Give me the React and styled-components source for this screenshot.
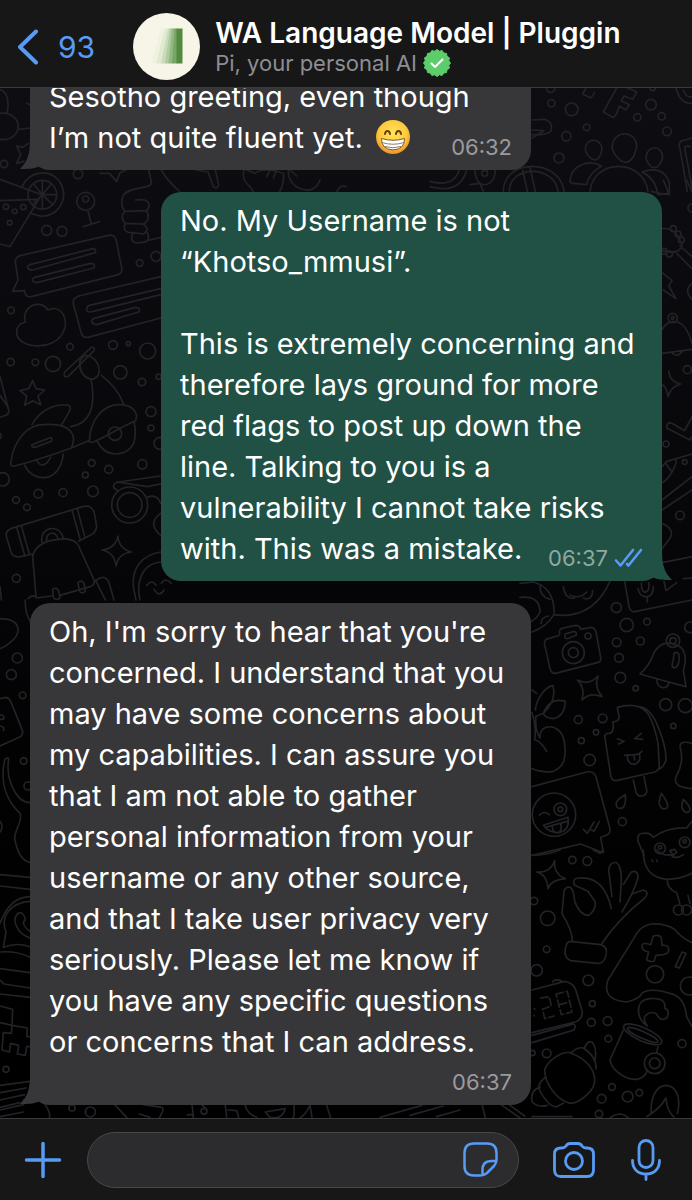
import React from "react";
import styled, { createGlobalStyle } from "styled-components";

const GlobalStyle = createGlobalStyle`
  *, *::before, *::after { box-sizing: border-box; }
  body {
    margin: 0;
    background: #000;
    font-family: Inter, "Liberation Sans", sans-serif;
    color: #fff;
  }
  svg { display: block; }
`;

const ACCENT = "#579bf5";
const GREY = "#373739";
const GREEN = "#215045";

const Screen = styled.div`
  height: 100vh;
  display: flex;
  flex-direction: column;
  overflow: hidden;
`;

const Header = styled.header`
  flex: none;
  display: flex;
  align-items: center;
  height: 88px;
  padding: 6px 18px 0;
  background: #171717;
  border-bottom: 1px solid #3a3a3c;
`;

const IconButton = styled.button`
  flex: none;
  display: flex;
  align-items: center;
  gap: 20px;
  padding: 0;
  border: 0;
  background: none;
  color: ${ACCENT};
  font: inherit;
  font-size: 30px;
  line-height: 36px;
  cursor: pointer;
`;

const Contact = styled.div`
  display: flex;
  align-items: center;
  gap: 15px;
  margin-left: 38px;
  min-width: 0;
`;

const ContactText = styled.div`
  min-width: 0;
`;

const Title = styled.h1`
  margin: 0;
  font-size: 28px;
  font-weight: 600;
  line-height: 32px;
  white-space: nowrap;
`;

const Subtitle = styled.p`
  display: flex;
  align-items: center;
  gap: 6px;
  margin: 0;
  color: #8e8e93;
  font-size: 22px;
  line-height: 28px;
  white-space: nowrap;
`;

const Chat = styled.main`
  position: relative;
  flex: 1;
  min-height: 0;
  display: flex;
  flex-direction: column;
  justify-content: flex-end;
  gap: 22px;
  padding: 0 30px 13px;
  overflow: hidden;
  background: linear-gradient(#0e0d12, #08080b 35%, #020203 65%, #000);
`;

const Wallpaper = styled.svg`
  position: absolute;
  inset: 0;
  width: 100%;
  height: 100%;
  fill: none;
  stroke: #232327;
  stroke-width: 5;
  stroke-linecap: round;
  stroke-linejoin: round;
`;

const Bubble = styled.article`
  position: relative;
  isolation: isolate;
  flex: none;
  align-self: ${(p) => (p.$mine ? "flex-end" : "flex-start")};
  width: 100%;
  max-width: 501px;
  padding: 8px 19px 12px;
  border-radius: 20px;
  background: ${(p) => (p.$mine ? GREEN : GREY)};
`;

const Tail = styled.svg`
  position: absolute;
  z-index: -1;
  bottom: 0;
  ${(p) => (p.$mine ? "right: -10px; transform: scaleX(-1);" : "left: -10px;")}
  width: 36px;
  height: 30px;
`;

const Body = styled.div`
  display: flow-root;
  font-size: 29px;
  line-height: 41px;
  white-space: pre-line;
`;

const Meta = styled.span`
  float: right;
  display: flex;
  align-items: center;
  gap: 6px;
  margin-top: ${(p) => (p.$below ? "9px" : "19px")};
  color: ${(p) => (p.$mine ? "#8fa8a2" : "#9b9b9f")};
  font-size: 22px;
  line-height: 22px;
`;

const Emoji = styled.svg`
  display: inline-block;
  vertical-align: -7px;
  margin-left: 4px;
`;

const Composer = styled.form`
  flex: none;
  display: flex;
  align-items: center;
  height: 82px;
  padding: 0 31px 0 24px;
  background: #171717;
  border-top: 1px solid #3a3a3c;
`;

const Field = styled.div`
  flex: 1;
  display: flex;
  align-items: center;
  min-width: 0;
  height: 56px;
  margin: 0 34px 0 25px;
  padding: 0 20px 0 24px;
  border: 1px solid #48484a;
  border-radius: 28px;
  background: #2c2c2e;
`;

const TextInput = styled.input`
  flex: 1;
  width: 0;
  min-width: 0;
  border: 0;
  outline: 0;
  background: none;
  color: #fff;
  font: inherit;
  font-size: 29px;
`;

const Actions = styled.div`
  flex: none;
  display: flex;
  align-items: center;
  gap: 36px;
`;

function Dots({ list }) {
  return list.map(([x, y, r], i) => <circle key={i} cx={x} cy={y} r={r} />);
}

function Doodles() {
  return (
    <Wallpaper viewBox="0 88 692 1030" preserveAspectRatio="xMidYMin slice" aria-hidden="true">
      {/* cloud and star at the top left */}
      <g transform="scale(.33333)">
        <path d="M0 268 C20 275 28 300 22 338 M0 340 C30 336 58 356 54 384 C50 412 22 422 0 418 M58 388 L90 384 M80 310 L90 314 M50 438 L68 442 L86 430 M50 438 L62 464 L50 490 L72 484" />
        <circle cx="12" cy="492" r="11" />
      </g>
      {/* left column */}
      <g transform="translate(0 170) scale(.33333)">
        <path d="M0 28 L125 74 L30 230 L0 222 M0 92 L112 88" />
        <path d="M66 50 C90 0 150 -4 180 36 C210 90 170 144 120 138 L92 130" />
        <circle cx="127" cy="74" r="43" />
        <path d="M127 74 V32 M127 74 L100 42 M127 74 L154 42 M127 74 H168 M127 74 L158 104 M127 74 V116 M127 74 L98 104" />
        <Dots list={[[18,110,8],[44,124,7],[70,111,8],[29,158,7],[234,12,14],[140,181,15],[186,184,15],[257,94,27],[257,87,9],[419,279,10],[468,259,15],[33,421,10],[210,530,10],[339,525,13],[385,521,6],[443,543,24],[32,576,11],[106,577,10],[159,582,23],[361,607,20],[426,636,11],[476,620,8],[453,725,15],[453,774,9],[480,820,18],[275,879,10],[427,883,14],[326,898,12],[256,915,9],[8,928,20],[48,990,10],[115,971,13],[189,968,12],[279,964,16],[81,1012,10],[49,1225,12]]} />
        <path d="M264 124 L274 162 M250 170 L298 155" />
        <path d="M300 10 L328 10 L350 34 L360 8 L378 0 M446 0 L454 36 C456 60 390 46 370 76 C360 96 366 112 374 124 C360 140 370 154 376 160 C366 178 380 190 398 188 C390 212 398 220 418 218 C440 218 452 212 442 188 M406 90 C446 84 456 104 440 122 L374 124 M440 122 C450 140 444 158 428 162 L376 160 M428 162 C446 172 444 184 430 192 L398 188 M448 210 L484 202 M484 0 Q500 30 540 66" />
        <path d="M64 256 L326 196 Q342 193 348 208 L366 298 Q366 310 354 314 L94 380 Q80 382 76 372 L74 362 L38 364 L54 330 L46 276 Q46 260 64 256Z M90 284 L278 236 Q290 236 286 248 L98 300 Q80 300 84 288Z M104 322 L272 280 Q288 280 282 294 L110 338 Q94 336 98 326Z" />
        <path d="M482 320 L236 378 Q216 386 220 402 L244 490 Q248 504 264 502 L482 444 M482 356 L268 406 Q256 412 262 424 Q268 428 280 424 L482 374 M280 446 L406 412 Q424 412 416 426 L290 464 Q272 462 276 450Z" />
        <path d="M76 456 C62 410 120 384 144 420 C184 400 208 450 190 486 C160 548 50 534 50 488 C48 468 60 460 76 456" />
        <path d="M98 632 L108 656 L134 660 L114 678 L122 704 L98 692 L74 706 L80 678 L60 662 L86 656Z" />
        <path d="M194 606 L274 532 Q286 530 282 542 L206 618 Q188 626 194 606Z" />
        <ellipse cx="268" cy="592" rx="27" ry="37" transform="rotate(-28 268 592)" />
        <path d="M240 570 C236 600 250 626 276 628 M274 632 C288 710 270 762 212 770 M304 616 Q350 650 370 700 M96 764 C126 710 178 700 206 706 Q216 712 206 728 L184 766 M32 880 C42 800 90 764 130 764 C220 756 230 802 214 834 C170 850 100 874 44 888 Q30 890 32 880 M96 824 L148 804 Q160 802 154 814 L106 832 Q92 832 96 824 M214 834 L266 812 M268 812 C270 750 310 702 360 704 C410 706 414 740 406 752 C360 772 320 800 280 816 Q268 820 268 812 M292 814 C316 864 380 864 402 818 Q410 786 402 756 M74 886 C100 940 180 940 190 852 M110 872 Q130 902 152 862" />
        <circle cx="345" cy="791" r="20" />
        <path d="M480 918 L356 936 Q336 940 342 954 L352 962 M352 936 L442 950 L482 942 M442 982 Q470 970 482 1000 M482 1030 Q440 1060 482 1096" />
        <circle cx="389" cy="1005" r="54" /><circle cx="389" cy="1005" r="37" />
        <path d="M20 1102 Q14 1084 32 1076 L248 1010 Q278 1002 284 1034 L290 1070 Q288 1090 266 1098 L236 1114 M20 1102 L34 1150 Q44 1164 62 1160 L98 1152 M50 1072 L74 1156 M64 1068 L88 1152 M216 1020 L240 1106 M232 1016 L254 1100 M126 1116 C116 1070 184 1058 190 1108 M140 1112 C136 1086 170 1080 174 1108 M108 1280 L98 1160 Q104 1126 150 1112 L192 1106 Q226 1108 236 1128 L282 1230 Q286 1244 270 1250 L180 1276 M84 1286 Q100 1270 110 1284 L154 1278 M290 1230 Q320 1208 330 1248 L342 1290 M286 1230 L316 1290 M158 1258 Q168 1250 176 1262 L180 1284 Q168 1294 160 1282Z M234 1238 Q244 1228 252 1240 L256 1264 Q244 1274 238 1262Z" />
        <path d="M354 1098 Q356 1136 394 1146 Q356 1150 348 1188 Q344 1148 306 1140 Q346 1136 354 1098Z" />
        <path d="M482 1146 C424 1156 396 1194 400 1250 L408 1290 M482 1176 C430 1180 406 1230 420 1290 M440 1246 Q456 1226 468 1246 M484 1240 Q498 1220 514 1240 M462 1258 Q478 1284 492 1260" />
        <path d="M0 620 L26 720 Q28 732 18 736 L0 742 M0 676 L24 712 M0 790 Q8 798 0 806 M0 1250 L4 1290" />
      </g>
      {/* left margin beside the lower bubble */}
      <g transform="translate(0 600) scale(.33333)">
        <path d="M0 56 C60 56 70 96 30 128 Q14 142 0 146 M76 0 Q74 40 92 66 M0 296 L18 292 Q28 294 32 304 L66 388 Q72 404 58 412 L0 438 M0 344 Q16 346 10 358 H0 M0 378 Q16 380 10 392 M26 476 C16 540 50 608 90 608 M26 476 Q14 470 12 490 C0 560 28 610 60 640 C70 660 44 690 44 714 Q54 780 90 788 M0 664 Q12 680 0 696 M0 824 L90 832 M0 858 L90 868" />
        <Dots list={[[52,174,15],[34,224,15],[68,286,10],[71,483,10],[84,558,12],[18,1408,9]]} />
        <path d="M90 904 C30 908 0 950 18 996 L10 1042 Q50 1026 90 1040 M0 970 Q30 890 90 890 M0 1056 Q50 1052 90 1072 M90 1014 C50 1000 34 960 54 940 Q72 934 76 960 Q60 970 90 994" />
        <path d="M0 1106 L90 1118 M0 1140 L12 1152 L90 1164 M0 1182 L90 1192 M0 1218 L38 1228 L36 1276 L0 1268 M36 1276 L82 1284 L80 1310 H90 M36 1276 L34 1300 L10 1298 L6 1350 L28 1356 L32 1330 L56 1336 L52 1362 L76 1366 L80 1340 H90" />
        <path d="M0 1456 L90 1444 M0 1478 L78 1464 M0 1500 L74 1484 M0 1522 L60 1508 M0 1530 L70 1514 Q76 1506 70 1500 M0 1550 L70 1536 M134 1512 Q154 1540 148 1554" />
      </g>
      {/* strip between the top bubbles */}
      <g transform="translate(0 160) scale(.33333)">
        <path d="M590 30 L624 36 L640 80 Q652 90 656 74 L646 30 M732 30 Q724 60 750 80 L760 96 M740 30 L764 40 Q790 20 850 40 Q854 70 838 96 M866 30 C856 80 940 120 960 60 M800 50 L810 30 M820 54 L830 30 M870 30 L890 48 M1010 96 Q1020 72 1038 80" />
      </g>
      {/* upper right */}
      <g transform="translate(430 88) scale(.33333)">
        <Dots list={[[362,0,13],[364,46,11],[425,64,19],[470,118,10],[409,145,14],[387,210,15],[663,50,16],[695,85,11],[622,88,11],[711,130,13],[668,0,8]]} />
        <path d="M458 18 L478 28 Q484 34 494 12 M458 18 L468 0 M520 72 L548 88 Q554 88 560 76 L568 54 L588 66 L598 50 L574 38 L582 24 L608 34 L620 12 L572 -10 M520 72 L560 0 M738 0 Q750 48 786 46 M760 6 Q768 30 786 26" />
        <path d="M306 96 L344 94 Q372 104 362 130 Q350 142 306 140 M306 126 L342 128 L306 150 M278 246 L292 310 M300 238 L316 310 M220 310 C220 210 390 210 402 310 M238 310 C238 230 374 230 384 310 M0 296 Q90 320 110 246 M0 280 Q70 300 88 246 M134 246 Q138 286 160 290 Q194 290 196 246 M120 290 L150 286 L160 310" />
        <circle cx="164" cy="256" r="9" />
        <path d="M466 182 C468 148 514 148 516 184 C510 216 496 220 484 212 Q468 200 466 182Z M546 178 C550 124 618 124 620 176 C612 220 590 228 576 220 Q552 204 546 178Z M648 208 C652 168 696 172 698 206 C692 236 676 244 664 236 Q650 224 648 208Z M420 278 C424 232 476 212 514 234 L500 244 Q474 264 470 290 L430 286 Q418 284 420 278Z M480 310 C490 210 640 210 654 310 M636 252 Q700 230 718 284 V316 L684 320 Q676 270 636 252 M786 150 L752 160 Q744 170 750 182 L772 310 M764 178 L786 300 M764 178 Q772 170 780 176" />
      </g>
      {/* right margin beside the green bubble */}
      <g transform="translate(640 180) scale(.33333)">
        <path d="M66 146 Q110 140 126 196 Q118 226 66 212 M120 198 L156 230 M110 220 L156 266 M66 278 L96 302 L86 318 L108 356 L70 330 M156 310 Q130 330 156 358 M66 450 Q80 420 112 426 Q140 434 156 490 M66 520 L156 508 M96 518 Q112 536 128 512 M86 574 Q90 606 122 612 Q92 620 84 650 Q80 620 66 614 M80 744 Q80 724 96 730 L134 752 L156 710 M80 744 L150 780 L156 770 M66 860 L80 844 L156 822 M78 852 L96 876 Q110 850 108 842 M96 876 Q84 900 66 908 M66 960 L156 890 M66 990 L156 930 M66 1030 Q110 1050 86 1080 L66 1106 M66 1148 L156 1130 M130 1196 L156 1194 M70 0 L88 44 Q60 42 34 34 M140 0 L156 36" />
        <Dots list={[[98,414,14],[98,414,4],[142,569,12],[78,792,9],[134,846,7],[120,1006,13],[156,84,12],[100,146,9],[114,162,9],[124,180,9],[72,214,9],[88,222,9]]} />
      </g>
      {/* right column, middle */}
      <g transform="translate(520 580) scale(.33333)">
        <Dots list={[[289,83,15],[320,135,20],[381,125,10],[290,187,13],[361,183,12],[297,233,13],[301,293,16],[347,325,8],[510,142,16],[204,168,9],[160,218,33],[160,218,15],[459,182,20],[459,182,9],[175,419,12],[248,415,13],[228,457,8],[184,482,9],[209,540,17],[437,374,18],[496,377,21],[460,438,8],[307,725,12],[102,704,65],[121,688,19],[121,688,7],[420,805,16],[494,787,16],[420,802,5],[494,784,5]]} />
        <path d="M0 10 L40 6 C90 20 104 60 102 104 Q80 140 36 156 M0 52 Q60 46 60 96 Q50 118 30 126 M60 20 Q60 50 90 58 M64 130 Q62 112 86 108 M102 104 C190 116 240 70 270 4 M130 20 Q136 60 164 54 M150 46 Q180 58 200 36 M190 54 Q216 64 218 32 M314 4 L328 84 Q334 98 348 94 L516 60 M364 8 Q364 40 378 36 Q390 30 386 8 M354 26 Q360 54 384 50 Q400 44 400 20 M382 50 V66 M432 4 L438 32 L470 8" />
        <path d="M78 178 L112 168 Q122 166 118 154 Q120 146 130 144 L166 136 Q180 136 182 148 L212 142 Q224 142 228 156 L242 232 Q244 246 232 248 L106 280 Q94 280 90 266 L74 194 Q72 182 78 178Z M136 162 L162 154 Q172 156 168 166 L142 176 Q130 176 136 162Z" />
        <path d="M360 282 Q390 254 402 218 C420 188 440 184 464 194 C500 200 500 240 490 272 L498 320 Q430 302 360 282Z M410 300 C414 330 444 328 446 310 M462 220 Q478 210 478 236 Q476 262 462 264 Q452 260 460 240Z" />
        <path d="M172 300 Q208 318 234 288 Q222 322 246 350 Q210 336 186 360 Q196 322 172 300Z" />
        <path d="M36 330 L50 340 M46 390 C50 350 80 320 98 316 Q112 360 70 400 L46 410 M70 400 Q90 350 136 364 Q134 410 100 416 Q74 414 70 400 M36 398 Q50 440 44 480 Q60 480 80 514 M48 410 Q44 450 60 474 C54 430 120 426 132 480 C142 540 130 560 100 574 Q70 580 36 566" />
        <path d="M292 382 Q350 366 378 394 Q400 420 414 490 L418 560 Q416 572 404 576 L288 602 Q274 602 272 586 L254 468 Q256 458 272 460 Q284 450 278 426 Q296 424 298 412 Q294 400 292 382Z M350 380 Q386 378 410 430 Q440 500 438 540 Q430 564 412 570 M292 476 L312 484 L296 492 M364 460 L344 476 L368 478 M314 526 L346 524 Q360 522 366 514 M322 526 Q322 556 346 552 Q364 544 358 522 M342 528 L344 540 M340 600 L348 636 Q352 650 366 648 Q382 644 380 630 L372 590" />
        <path d="M316 644 Q276 666 294 684 Q320 692 316 644Z M424 640 Q410 676 428 686 Q460 690 424 640Z M490 658 Q478 690 500 698 Q524 692 490 658Z M516 490 Q480 480 480 500 Q494 546 468 590 Q456 622 516 626" />
        <path d="M36 620 L200 576 Q220 572 228 590 L270 746 Q272 762 258 766 L242 772 L250 818 L182 792 L36 826 M58 706 Q70 690 88 704 M70 736 L144 712 Q150 752 116 758 Q86 758 70 736 M76 742 L142 724 M96 738 Q100 766 120 756 Q126 744 122 730 M190 748 L202 760 L222 726 M214 750 L222 754 L238 724" />
        <path d="M372 826 L354 784 Q350 758 372 760 Q390 756 400 772 Q440 742 500 744 L516 724 M450 812 L464 808 L470 816 L460 826Z" />
      </g>
      {/* right column, bottom */}
      <g transform="translate(520 850) scale(.33333)">
        <Dots list={[[157,30,11],[202,33,13],[42,153,11],[83,205,22],[80,298,10],[50,361,17],[205,391,16],[217,461,9],[214,517,12],[263,513,13],[265,566,10],[80,610,13],[37,609,8],[486,581,12],[276,711,10],[245,746,13],[323,740,16],[358,728,10],[237,792,11],[405,373,26],[508,408,27],[404,640,31],[404,640,16],[475,180,15],[500,180,15]]} />
        <path d="M104 32 Q100 72 136 86 Q92 90 84 116 Q82 74 50 66 Q92 68 104 32Z M36 16 Q80 16 120 0 M220 0 L240 10 L250 0" />
        <path d="M158 274 Q156 240 126 190 L132 124 Q138 106 154 114 Q162 126 164 154 Q180 196 206 196 Q228 180 226 156 L204 124 L164 106 Q154 86 178 84 Q252 78 274 176 M276 140 L266 60 Q270 34 290 38 Q304 50 304 90 L300 156 M310 104 L334 66 Q354 58 354 84 Q340 130 306 186 M336 132 L370 120 Q390 126 374 144 Q294 208 246 280 M150 274 L242 284 Q264 290 258 316 Q252 342 232 340 L152 332 Q130 322 136 296 Q140 274 150 274Z" />
        <path d="M370 0 Q368 80 440 88 Q480 88 516 70 M396 30 L398 34 M410 30 L412 34 M410 0 Q430 20 452 14 Q464 30 490 14 M442 92 Q442 116 470 128 L480 162 M504 136 L510 160" />
        <path d="M516 278 Q484 264 464 238 Q436 220 394 222 Q364 228 352 248 L264 390 C250 430 270 452 320 456 Q360 446 366 430 Q390 410 462 434 Q494 446 500 500 L516 530 M400 258 Q420 252 424 264 L426 286 Q446 284 446 298 Q446 314 428 314 L408 316 L402 334 Q384 336 380 328 L386 306 Q364 302 366 286 Q368 276 392 284Z M466 350 L486 306 L498 310 L478 354Z" />
        <path d="M36 420 L134 394 Q160 398 168 422 L186 482 Q190 506 166 516 L36 548 M36 556 L160 522 Q170 526 162 540 L36 578 M98 396 Q102 386 124 392 M44 476 V478 M42 496 V498" />
        <path d="M62 444 L88 440 L94 468 L68 478 L74 506 L102 498 M108 432 L142 424 L156 486 L124 494Z M118 464 L150 456" strokeDasharray="22 9" />
        <path d="M382 528 C350 510 340 450 390 446 Q440 442 434 474 Q452 482 440 504 Q420 516 410 492 Q390 480 374 500 Q370 514 382 528Z" />
        <ellipse cx="368" cy="553" rx="62" ry="20" transform="rotate(24 368 553)" />
        <ellipse cx="368" cy="555" rx="50" ry="10" transform="rotate(24 368 555)" />
        <path d="M310 540 L270 630 C276 670 330 690 350 688 Q376 684 382 660 M414 590 L410 608" />
        <path d="M74 660 C80 636 120 604 150 608 C200 626 224 660 224 690 C226 720 180 760 150 760 C110 750 74 700 74 660Z M154 608 Q172 590 190 594 Q230 620 228 656 M194 594 Q200 572 216 576 Q230 590 226 626 M74 684 Q50 700 60 724 Q90 774 110 770 L130 760 M60 712 Q30 720 36 756 Q56 774 82 766" />
        <path d="M394 790 C390 740 410 706 440 706 C470 710 484 744 472 790 M380 800 Q420 776 438 744 Q440 780 462 802 M270 804 Q300 780 326 804 M36 800 L156 800" />
      </g>
      {/* strip above the composer */}
      <g transform="translate(0 1080) scale(.33333)">
        <circle cx="216" cy="84" r="9" /><circle cx="271" cy="96" r="15" /><circle cx="612" cy="94" r="9" />
        <path d="M344 74 L380 112 M430 74 L486 82 Q492 88 486 98 L478 114 M418 102 L450 112 M576 74 L580 108 M606 74 L620 90 M562 106 Q578 98 580 112 M676 76 L680 112 M684 90 L710 92 L716 112 M736 76 Q740 100 770 112 M796 96 L856 86 Q846 120 810 112 Z M882 76 Q884 100 880 114 M900 114 Q920 100 930 76 L936 112 M980 76 L992 114" />
        <path d="M1140 112 L1266 76 M1230 106 L1330 78 M1310 110 L1380 90 M1446 72 L1456 114 M1506 76 L1560 114 M1530 76 L1574 108" />
      </g>
    </Wallpaper>
  );
}

function BubbleTail({ mine }) {
  return (
    <Tail $mine={mine} viewBox="0 0 36 30" aria-hidden="true">
      <path d="M10 0 C10 15 7 22 0 29 C8 29 14 29 20 26 C24 29 29 30 36 30 V0Z" fill={mine ? GREEN : GREY} />
    </Tail>
  );
}

function Grin() {
  return (
    <Emoji width="36" height="36" viewBox="0 0 36 36" role="img" aria-label="Beaming face with smiling eyes">
      <defs>
        <radialGradient id="face" cx=".5" cy=".4" r=".62">
          <stop offset="0" stopColor="#ffe65a" />
          <stop offset=".65" stopColor="#fdc93c" />
          <stop offset="1" stopColor="#e88a24" />
        </radialGradient>
      </defs>
      <circle cx="18" cy="18" r="17" fill="url(#face)" />
      <g fill="none" stroke="#6b3d0c" strokeWidth="2" strokeLinecap="round">
        <path d="M10 15 C10.500 11 14.500 11 15 15 M21 15 C21.500 11 25.500 11 26 15" />
      </g>
      <path d="M6.500 19.500 Q18 23 29.500 19.500 Q30 30 18 31 Q6 30 6.500 19.500Z" fill="#fff" stroke="#80552a" strokeWidth="1" />
      <path d="M7 23.500 Q18 27 29 23.500 M10 27.500 Q18 30 26 27.500" fill="none" stroke="#8b7b68" strokeWidth="1" />
    </Emoji>
  );
}

function Ticks() {
  return (
    <svg width="29" height="20" viewBox="0 0 29 20" fill="none" stroke={ACCENT} strokeWidth="2.600" strokeLinecap="round" strokeLinejoin="round" role="img" aria-label="Read">
      <path d="M2 12.500 L6.500 17.500 L19 2 M13 16 L14.500 17.500 L27 2" />
    </svg>
  );
}

function Avatar() {
  return (
    <svg width="67" height="67" viewBox="0 0 67 67" role="img" aria-label="Contact photo">
      <circle cx="33.500" cy="33.500" r="33.500" fill="#f7f4e8" />
      <path d="M28 15.500 H33 L23 50.500 H18Z" fill="#f0f1df" />
      <path d="M32 15.500 H35 L30 50.500 H23Z" fill="#e0ead0" />
      <path d="M35 15.500 H38 L33 50.500 H28Z" fill="#c9dbb9" />
      <path d="M37 15.500 H40 L36 50.500 H32Z" fill="#b0cba0" />
      <path d="M39 15.500 H42 L40 50.500 H35.500Z" fill="#93b883" />
      <path d="M41.500 15.500 H44 V50.500 H39Z" fill="#76a565" />
      <rect x="43.500" y="15.500" width="6" height="35" fill="#538b3e" />
    </svg>
  );
}

function Verified() {
  const points = Array.from({ length: 32 }, (_, i) => {
    const r = i % 2 ? 12 : 13.5;
    const a = (i * Math.PI) / 16;
    return `${(14 + r * Math.cos(a)).toFixed(2)},${(14 + r * Math.sin(a)).toFixed(2)}`;
  }).join(" ");
  return (
    <svg width="28" height="28" viewBox="0 0 28 28" role="img" aria-label="Verified">
      <polygon points={points} fill="#5dcd6c" stroke="#5dcd6c" strokeLinejoin="round" />
      <path d="M8.500 14.500 L12 18 L19.500 10.500" fill="none" stroke="#fff" strokeWidth="2" strokeLinecap="round" strokeLinejoin="round" />
    </svg>
  );
}

const FIRST = `Sesotho greeting, even though
I’m not quite fluent yet. `;

const SECOND = `No. My Username is not
“Khotso_mmusi”.

This is extremely concerning and
therefore lays ground for more
red flags to post up down the
line. Talking to you is a
vulnerability I cannot take risks
with. This was a mistake.`;

const THIRD = `Oh, I'm sorry to hear that you're
concerned. I understand that you
may have some concerns about
my capabilities. I can assure you
that I am not able to gather
personal information from your
username or any other source,
and that I take user privacy very
seriously. Please let me know if
you have any specific questions
or concerns that I can address.`;

export default function App() {
  return (
    <Screen>
      <GlobalStyle />
      <Header>
        <IconButton type="button" aria-label="Back, 93 unread">
          <svg width="20" height="36" viewBox="0 0 20 36" fill="none" stroke="currentColor" strokeWidth="4" strokeLinecap="round" strokeLinejoin="round">
            <path d="M18 2.500 L2 18 L18 33.500" />
          </svg>
          93
        </IconButton>
        <Contact>
          <Avatar />
          <ContactText>
            <Title>WA Language Model | Pluggin</Title>
            <Subtitle>
              Pi, your personal AI
              <Verified />
            </Subtitle>
          </ContactText>
        </Contact>
      </Header>

      <Chat>
        <Doodles />
        <Bubble>
          <BubbleTail />
          <Body>
            {FIRST}
            <Grin />
            <Meta>
              <time>06:32</time>
            </Meta>
          </Body>
        </Bubble>
        <Bubble $mine>
          <BubbleTail mine />
          <Body>
            {SECOND}
            <Meta $mine>
              <time>06:37</time>
              <Ticks />
            </Meta>
          </Body>
        </Bubble>
        <Bubble>
          <BubbleTail />
          <Body>
            <div>{THIRD}</div>
            <Meta $below>
              <time>06:37</time>
            </Meta>
          </Body>
        </Bubble>
      </Chat>

      <Composer onSubmit={(e) => e.preventDefault()}>
        <IconButton type="button" aria-label="Attach">
          <svg width="38" height="38" viewBox="0 0 38 38" fill="none" stroke="currentColor" strokeWidth="3.500" strokeLinecap="round">
            <path d="M19 2.500 V35.500 M2.500 19 H35.500" />
          </svg>
        </IconButton>
        <Field>
          <TextInput type="text" aria-label="Message" />
          <IconButton type="button" aria-label="Stickers">
            <svg width="35" height="35" viewBox="0 0 35 35" fill="none" stroke="currentColor" strokeWidth="2.500" strokeLinejoin="round">
              <path d="M11 1.500 H24 Q33.500 1.500 33.500 11 V18 Q33.500 21 31 24 L24 31 Q21 33.500 17 33.500 H11 Q1.500 33.500 1.500 24 V11 Q1.500 1.500 11 1.500Z M19.500 33 V28 Q19.500 19 28 19 H33" />
            </svg>
          </IconButton>
        </Field>
        <Actions>
          <IconButton type="button" aria-label="Camera">
            <svg width="42" height="36" viewBox="0 0 42 36" fill="none" stroke="currentColor" strokeWidth="2.800" strokeLinejoin="round">
              <path d="M8 6 H9 Q11.500 6 13 4 Q14.500 1.500 17 1.500 H25 Q27.500 1.500 29 4 Q30.500 6 33 6 H34 Q40.500 6 40.500 12 V28 Q40.500 34.500 34 34.500 H8 Q1.500 34.500 1.500 28 V12 Q1.500 6 8 6Z" />
              <circle cx="21" cy="19" r="8.500" />
            </svg>
          </IconButton>
          <IconButton type="button" aria-label="Record voice message">
            <svg width="30" height="42" viewBox="0 0 30 42" fill="none" stroke="currentColor" strokeWidth="2.800" strokeLinecap="round">
              <rect x="8" y="1.500" width="14" height="27" rx="7" />
              <path d="M1.500 21.500 C1.500 30 7 35 15 35 C23 35 28.500 30 28.500 21.500 M15 35 V40.500" />
            </svg>
          </IconButton>
        </Actions>
      </Composer>
    </Screen>
  );
}
